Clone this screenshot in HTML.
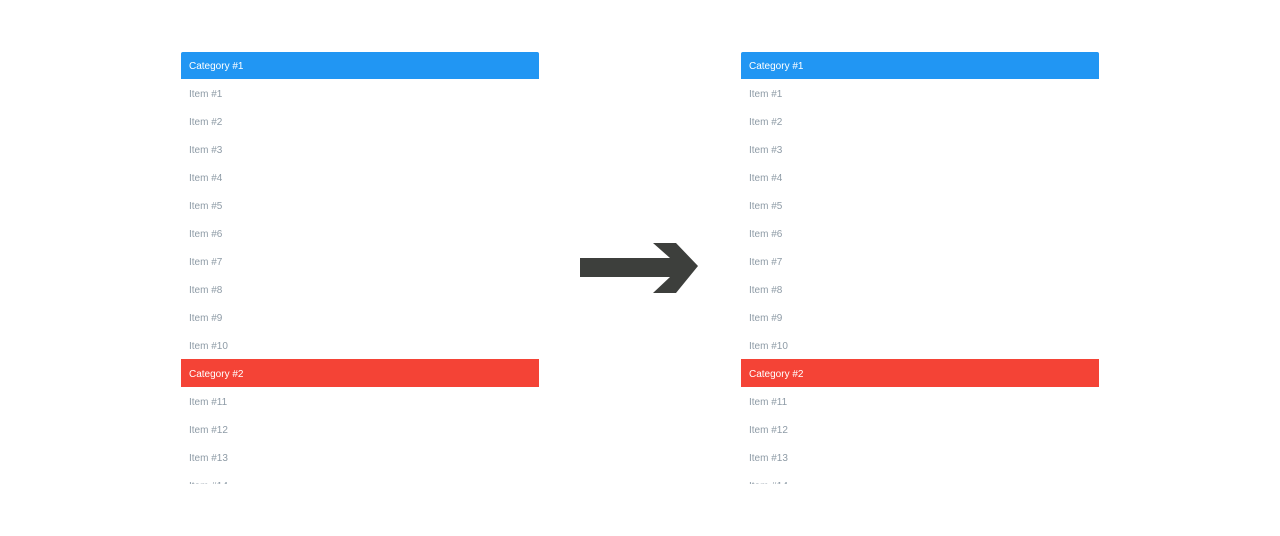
<!DOCTYPE html>
<html><head><style>
body{margin:0;width:1280px;height:536px;background:#fff;position:relative;overflow:hidden;font-family:"Liberation Sans",sans-serif;}
.p{position:absolute;top:52px;width:358px;height:432px;overflow:hidden;}
.r{height:28px;line-height:30px;padding-top:1px;padding-left:8px;font-size:10px;color:#8e9ba6;box-sizing:border-box;}
.h{color:#fff;}
.b{background:#2196f3;border-radius:2px 2px 0 0;height:27px;line-height:28px}
.d{background:#f44336;}
</style></head><body>
<div class="p" style="left:181px">
<div class="r h b">Category #1</div>
<div class="r">Item #1</div><div class="r">Item #2</div><div class="r">Item #3</div><div class="r">Item #4</div><div class="r">Item #5</div><div class="r">Item #6</div><div class="r">Item #7</div><div class="r">Item #8</div><div class="r">Item #9</div><div class="r">Item #10</div>
<div class="r h d">Category #2</div>
<div class="r">Item #11</div><div class="r">Item #12</div><div class="r">Item #13</div><div class="r">Item #14</div>
</div>
<div class="p" style="left:741px">
<div class="r h b">Category #1</div>
<div class="r">Item #1</div><div class="r">Item #2</div><div class="r">Item #3</div><div class="r">Item #4</div><div class="r">Item #5</div><div class="r">Item #6</div><div class="r">Item #7</div><div class="r">Item #8</div><div class="r">Item #9</div><div class="r">Item #10</div>
<div class="r h d">Category #2</div>
<div class="r">Item #11</div><div class="r">Item #12</div><div class="r">Item #13</div><div class="r">Item #14</div>
</div>
<svg style="position:absolute;left:0;top:0" width="1280" height="536">
<polygon points="580,258 670,258 653,243 676,243 698,266 676,293 653,293 670,277 580,277" fill="#3d3f3c"/>
</svg>
</body></html>
